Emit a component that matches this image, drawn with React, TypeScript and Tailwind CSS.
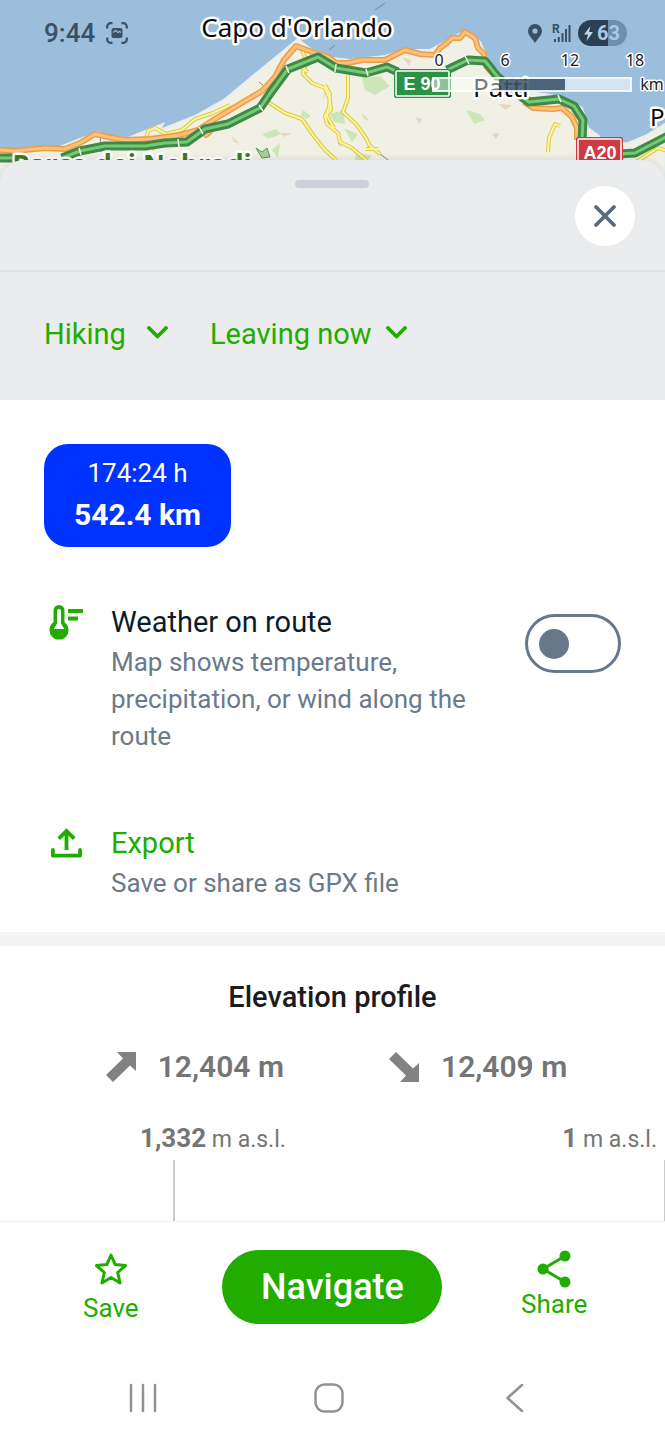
import type { ReactNode } from 'react'

const MOTORWAYS = [
    'M0 158 L18 158 M62 158 L80 151 L105 146 L145 146 L165 143 L187 142 L205 129 L228 124 L260 108 L271 92 L288 69 L318 57 L336 68 L366 73 L387 67 L398 72',
    'M447 70 L468 60 L485 61 L497 76 L515 92 L529 102 L559 99 L574 106 L583 120 L582 140',
    'M618 154 L635 153 L668 136',
]

const MAIN_ROADS = [
    'M0 150 L15 151 L45 148 L65 149 L80 143 L95 134 L108 137 L125 140 L150 139 L180 135 L198 130 L215 119 L240 104 L262 91 L275 77 L284 60 L296 46 L315 53 L328 57 L336 63 L348 63 L362 60 L385 60 L405 50 L420 54 L435 55 L440 48 L447 43 L452 38 L460 38 L465 32 L475 38 L478 48 L484 54 L486 66 L497 78',
    'M524 102 L533 108 L553 109 L562 108 L572 117 L577 128 L577 140',
    'M202 130 L206 135 L211 131',
]

const SIDE_ROADS = [
    'M144 148 L148 131 L155 128 L166 134 L182 130 L195 119 L213 113 L230 105',
    'M148 140 L155 150',
    'M268 102 L285 113 L302 119 L313 135 L325 150 L336 160',
    'M302 50 L306 60 L303 74 L312 83 L325 88 L330 100 L331 110 L325 116 L327 124 L338 133 L340 142 L352 148 L366 160',
    'M309 63 L302 68 L308 72',
    'M325 85 L330 94 L329 108 L326 114 L334 128',
    'M348 75 L348 98 L343 112 L356 124 L366 138 L370 146 L380 154 M366 149 L378 149',
    'M548 152 L549 138 L555 124 L560 126',
    'M636 162 L658 148 L668 151',
]

const WOODS =
    'M262 134 L276 129 L281 134 L268 139 Z M303 110 L311 116 L307 119 L301 115 Z M272 150 L280 143 L278 158 Z M330 114 L343 110 L345 124 L334 122 Z M362 78 L380 76 L390 86 L375 95 L365 90 Z M466 110 L480 114 L485 120 L474 124 Z M344 128 L358 134 L352 142 Z M356 152 L372 156 L368 160 L355 160 Z'

const FIELDS =
    'M231 135 L240 144 L234 142 Z M322 100 L327 86 L329 90 Z M280 133 L292 133 L284 137 Z M361 112 L370 121 L364 119 Z M416 117 L422 119 L419 124 Z M492 134 L499 133 L496 139 Z M498 104 L512 105 L506 110 Z M402 57 L411 60 L409 66 Z M337 143 L344 142 L340 147 Z'

const GREEN = '#20ad00'

function RoadLayer({ paths, casing, fill, width, inner }: { paths: string[]; casing: string; fill: string; width: number; inner: number }) {
    return (
        <g fill="none" strokeLinejoin="round">
            {paths.map((d) => <path key={d} d={d} stroke={casing} strokeWidth={width} />)}
            {paths.map((d) => <path key={d + 'in'} d={d} stroke={fill} strokeWidth={inner} />)}
        </g>
    )
}

function MapView() {
    return (
        <svg viewBox="0 0 665 186" preserveAspectRatio="xMidYMin slice" className="block w-full h-full">
            <rect width="665" height="186" fill="#9abedc" />
            <path
                d="M0 150 L60 147 L80 139 L98 132 L110 137 L128 138 L163 124 L160 130 L195 116 L225 99 L260 70 L298 39 L312 50 L332 58 L350 60 L385 56 L405 50 L430 50 L448 40 L465 31 L480 42 L488 60 L500 74 L514 90 L528 92 L545 94 L562 98 L582 108 L588 128 L599 136 L602 144 L628 143 L645 136 L665 124 L665 186 L0 186 Z"
                fill="#f0f0e5"
                stroke="#e9edee"
                strokeWidth="2"
            />
            <path d={WOODS} fill="#cde5b8" />
            <path d={FIELDS} fill="#e6d6c1" />
            <path d="M256 148 L262 158 L270 157 L267 148 L262 152 Z" fill="#a9cf98" stroke="#5d9557" strokeWidth="1" />
            <path d="M375 10 L385 3 M329 50 L335 45 M259 82 L265 87 M100 132 L101 152 M380 154 L388 160" stroke="#7189a5" strokeWidth="1" />
            <RoadLayer paths={SIDE_ROADS} casing="#dccb3c" fill="#faf5a4" width={4} inner={2} />
            <RoadLayer paths={MAIN_ROADS} casing="#ec9d48" fill="#fcc078" width={6} inner={3} />
            <RoadLayer paths={MOTORWAYS} casing="#41874a" fill="#74cc72" width={9} inner={3} />
            <path d="M79 148 L81 155 M178 139 L179 147 M199 127 L203 134 M259 105 L263 111 M286 66 L289 73 M336 64 L335 72 M366 69 L368 76 M465 56 L469 64 M558 95 L561 102" stroke="#f4f6e8" strokeWidth="1.5" />

            <g fontFamily='"Noto Sans", sans-serif' stroke="#fff" strokeWidth="5" strokeLinejoin="round" paintOrder="stroke">
                <text x="297" y="37" fontSize="26" textAnchor="middle" fill="#0b0b0b">Capo d'Orlando</text>
                <text x="473" y="97" fontSize="26" fill="#0b0b0b">Patti</text>
                <text x="650" y="126" fontSize="24" fill="#0b0b0b">P</text>
                <text x="132" y="174" fontSize="27" fontWeight="700" textAnchor="middle" fill="#3f7a1c">Parco dei Nebrodi</text>
            </g>

            <g fontFamily='"Liberation Sans", sans-serif' fontWeight="700" fill="#fff" textAnchor="middle">
                <rect x="394" y="69" width="57" height="29" rx="2" fill="#2a9145" />
                <rect x="396" y="71" width="53" height="25" rx="1" fill="none" stroke="#fff" strokeWidth="1.5" />
                <text x="422" y="90" fontSize="18">E 90</text>
                <rect x="576" y="137" width="47" height="30" rx="2" fill="#cf3b45" />
                <rect x="578" y="139" width="43" height="26" rx="1" fill="none" stroke="#fff" strokeWidth="1.5" />
                <text x="600" y="159" fontSize="18">A20</text>
            </g>

            {/* distance scale */}
            <rect x="433" y="79" width="66" height="12" fill="#fff" fillOpacity="0.45" />
            <rect x="499" y="79" width="66" height="12" fill="#40566d" fillOpacity="0.88" />
            <rect x="565" y="79" width="66" height="12" fill="#d3e4f3" />
            <rect x="433" y="78" width="198" height="13" fill="none" stroke="#fff" strokeOpacity="0.85" strokeWidth="2" />
            <g fontFamily='"Noto Sans", sans-serif' fontSize="16" fill="#222" stroke="#fff" strokeWidth="3" strokeLinejoin="round" paintOrder="stroke" textAnchor="middle">
                <text x="439" y="66">0</text>
                <text x="505" y="66">6</text>
                <text x="570" y="66">12</text>
                <text x="635" y="66">18</text>
                <text x="652" y="90">km</text>
            </g>
        </svg>
    )
}

function StatusBar() {
    return (
        <div className="absolute inset-x-0 top-0 flex items-center justify-between pt-5 pl-11 pr-[38px] text-[#3b5064]">
            <div className="flex items-center gap-[11px]">
                <span className="text-[26px] leading-[26px] font-medium">9:44</span>
                <svg width="22" height="22" viewBox="0 0 22 22" fill="none" stroke="currentColor" strokeWidth="2.2">
                    <path d="M1.2 6.500V4.500A3.300 3.300 0 0 1 4.500 1.200H6.500M15.500 1.200H17.500A3.300 3.300 0 0 1 20.800 4.500V6.500M20.800 15.500V17.500A3.300 3.300 0 0 1 17.500 20.800H15.500M6.500 20.800H4.500A3.300 3.300 0 0 1 1.200 17.500V15.500" />
                    <rect x="5.500" y="6" width="11" height="10" rx="2" fill="currentColor" stroke="none" />
                    <path d="M7 10.500L9.500 8.500L12 10.500L13.500 9.500L15 10.500" stroke="#9abedc" strokeWidth="1.200" />
                </svg>
            </div>
            <div className="flex items-center">
                <svg width="14" height="19" viewBox="0 0 14 19" className="mr-[10px]">
                    <path fillRule="evenodd" fill="currentColor" d="M7 0A7 7 0 0 0 0 7C0 11.500 4 14 7 19C10 14 14 11.500 14 7A7 7 0 0 0 7 0ZM7 4.400A2.600 2.600 0 1 1 7 9.600A2.600 2.600 0 0 1 7 4.400Z" />
                </svg>
                <svg width="19" height="20" viewBox="0 0 19 20" className="mr-[7px]" fill="currentColor">
                    <text x="0" y="10" fontSize="12" fontWeight="700">R</text>
                    <path d="M2 16H4V19H2ZM5.800 14H7.800V19H5.800ZM9.500 10H11.500V19H9.500ZM13 6H15V19H13ZM16.500 2H18.500V19H16.500Z" />
                </svg>
                <div className="flex h-[26px] w-[49px] items-center gap-1 overflow-hidden rounded-full bg-linear-to-r from-[#2b4153] from-62% to-[#6e90ae] to-62% pl-[6px]">
                    <svg width="9" height="15" viewBox="0 0 9 15" fill="#bcd8ef">
                        <path d="M6.500 0L0 8.500H4L2.500 15L9 6H5Z" />
                    </svg>
                    <span className="text-xl leading-[26px] font-bold text-[#a9c9e4]">63</span>
                </div>
            </div>
        </div>
    )
}

function Dropdown({ label, value, className }: { label: string; value: string; className?: string }) {
    return (
        <div className={`relative ${className ?? ''}`}>
            <select aria-label={label} className="field-sizing-content w-full appearance-none bg-transparent pr-[35px] text-[29px] leading-10 text-[#20ad00] outline-none">
                <option>{value}</option>
            </select>
            <svg width="21" height="13" viewBox="0 0 21 13" className="pointer-events-none absolute right-0 top-3" fill="none" stroke={GREEN} strokeWidth="3.800" strokeLinecap="round" strokeLinejoin="round">
                <path d="M2 2L10.500 10.500L19 2" />
            </svg>
        </div>
    )
}

function Row({ icon, children }: { icon: ReactNode; children: ReactNode }) {
    return (
        <div className="flex items-start">
            <div className="flex w-[67px] shrink-0 pt-1 pl-[5px]">{icon}</div>
            {children}
        </div>
    )
}

export default function App() {
    return (
        <div className="flex min-h-screen flex-col bg-white font-[Roboto,sans-serif]">
            <header className="relative h-[186px] overflow-hidden">
                <MapView />
                <StatusBar />
            </header>

            <main className="relative -mt-[26px] flex-1">
                <div className="rounded-t-3xl bg-[#ebecee] shadow-[0_-2px_6px_rgba(0,0,0,0.08)]">
                    <div className="grid h-28 grid-cols-3 items-start border-b-2 border-[#dbdfe9] px-[30px]">
                        <span className="col-start-2 mt-5 h-2 w-[74px] justify-self-center rounded-full bg-[#cdd2da]" />
                        <button type="button" aria-label="Close" className="mt-[26px] flex size-[60px] items-center justify-center justify-self-end rounded-full bg-white">
                            <svg width="24" height="24" viewBox="0 0 24 24" stroke="#586b7e" strokeWidth="3.800" strokeLinecap="round">
                                <path d="M3 3L21 21M21 3L3 21" />
                            </svg>
                        </button>
                    </div>
                    <div className="flex h-32 items-center gap-[42px] px-11 pb-1">
                        <Dropdown label="Activity" value="Hiking" className="min-w-[124px]" />
                        <Dropdown label="Departure" value="Leaving now" />
                    </div>
                </div>

                <section className="bg-white px-11 pt-11 pb-[30px]">
                    <button type="button" className="flex flex-col items-center rounded-3xl bg-[#0033ff] px-[30px] pt-[9px] pb-3 text-white">
                        <span className="text-[26px] leading-[41px]">174:24 h</span>
                        <span className="text-3xl leading-[41px] font-bold">542.4 km</span>
                    </button>

                    <div className="mt-[54px] flex items-start justify-between">
                        <Row
                            icon={
                                <svg width="35" height="35" viewBox="0 0 35 35">
                                    <path fillRule="evenodd" fill={GREEN} d="M4.500 5.500A5.500 5.500 0 0 1 15.500 5.500V17.300A9.500 9.500 0 1 1 4.500 17.300ZM8 6V18.500L4.800 24H15.200L12 18.500V6A2 2 0 0 0 8 6Z" />
                                    <path fill={GREEN} d="M19 4H34V8H19ZM19 11.500H29V15.500H19Z" />
                                </svg>
                            }
                        >
                            <div className="max-w-[370px]">
                                <label htmlFor="weather" className="block text-[29px] leading-[43px] text-[#0c1c2c]">Weather on route</label>
                                <p id="weather-desc" className="text-[26px] leading-[37px] text-[#6a7a8a]">Map shows temperature, precipitation, or wind along the route</p>
                            </div>
                        </Row>
                        <input
                            id="weather"
                            type="checkbox"
                            role="switch"
                            aria-describedby="weather-desc"
                            className="mt-[13px] flex h-[59px] w-24 shrink-0 appearance-none items-center rounded-full border-[3px] border-[#66788a] px-[11px] before:size-[30px] before:rounded-full before:bg-[#66788a] checked:justify-end"
                        />
                    </div>

                    <div className="mt-[67px]">
                        <Row
                            icon={
                                <svg width="35" height="35" viewBox="0 0 35 35" fill="none" stroke={GREEN} strokeWidth="3.800" strokeLinejoin="round">
                                    <path d="M3.900 24V29.600H31.100V24" strokeLinecap="round" />
                                    <path d="M17.500 24V5.500M9.800 12.700L17.500 5L25.200 12.700" strokeLinejoin="miter" />
                                </svg>
                            }
                        >
                            <button type="button" className="text-left">
                                <span className="block text-[29px] leading-[43px] text-[#20ad00]">Export</span>
                                <span className="block text-[26px] leading-[37px] text-[#6a7a8a]">Save or share as GPX file</span>
                            </button>
                        </Row>
                    </div>
                </section>

                <section className="border-t-[14px] border-[#f4f4f7] pt-7">
                    <h2 className="text-center text-[29px] leading-[46px] font-medium text-[#1c1c1e]">Elevation profile</h2>
                    <div className="mt-6 flex justify-center gap-[105px] pl-2 text-3xl leading-[46px] font-semibold text-[#757575]">
                        <div className="flex items-center gap-[22px]">
                            <svg width="30" height="30" viewBox="0 0 30 30" fill="#828282">
                                <path d="M11 0H30V19L24 13.500L7 30L0 23L17 6.500Z" />
                            </svg>
                            <span className="leading-[46px]">12,404 m</span>
                        </div>
                        <div className="flex items-center gap-[22px]">
                            <svg width="30" height="30" viewBox="0 0 30 30" fill="#828282">
                                <path d="M11 30H30V11L24 16.500L7 0L0 7L17 23.500Z" />
                            </svg>
                            <span className="leading-[46px]">12,409 m</span>
                        </div>
                    </div>
                    <div className="mt-7 flex justify-between pl-[140px] pr-2 text-[23px] leading-10 text-[#757575]">
                        <span><strong className="text-[26px]">1,332</strong> m a.s.l.</span>
                        <span><strong className="text-[26px]">1</strong> m a.s.l.</span>
                    </div>
                    <svg className="block h-[61px] w-full" stroke="#c9c9cb" strokeWidth="2">
                        <path d="M174 0V61" />
                        <line x1="100%" y1="0" x2="100%" y2="61" />
                    </svg>
                </section>
            </main>

            <footer className="border-t border-[#f1f1f3] bg-white">
                <div className="grid grid-cols-3 items-start justify-items-center pt-7 pb-8 text-[26px] leading-8 text-[#20ad00]">
                    <button type="button" className="flex flex-col items-center gap-[6px] pt-[2px]">
                        <svg width="34" height="34" viewBox="0 0 34 34" fill="none" stroke={GREEN} strokeWidth="3" strokeLinejoin="round">
                            <path d="M17 3L21.200 12.600L31.500 13.600L23.700 20.500L26 31L17 25.500L8 31L10.300 20.500L2.500 13.600L12.800 12.600Z" />
                        </svg>
                        Save
                    </button>
                    <button type="button" className="h-[74px] w-[220px] rounded-full bg-[#20ad00] text-4xl font-medium text-white">Navigate</button>
                    <button type="button" className="flex flex-col items-center">
                        <svg width="34" height="38" viewBox="0 0 34 38" fill={GREEN} stroke={GREEN}>
                            <path d="M28 6L6 19L28 32" fill="none" strokeWidth="3" />
                            <circle cx="28" cy="6" r="5.500" stroke="none" />
                            <circle cx="6" cy="19" r="5.500" stroke="none" />
                            <circle cx="28" cy="32" r="5.500" stroke="none" />
                        </svg>
                        Share
                    </button>
                </div>
                <nav className="grid h-[84px] grid-cols-3 place-items-center pl-[50px] pr-[57px]">
                    <button type="button" aria-label="Recent apps">
                        <svg width="30" height="30" viewBox="0 0 30 30" stroke="#929292" strokeWidth="2.500" strokeLinecap="round">
                            <path d="M3 2V28M15 2V28M27 2V28" />
                        </svg>
                    </button>
                    <button type="button" aria-label="Home">
                        <svg width="30" height="30" viewBox="0 0 30 30" fill="none" stroke="#929292" strokeWidth="2.500">
                            <rect x="1.500" y="1.500" width="27" height="27" rx="9" />
                        </svg>
                    </button>
                    <button type="button" aria-label="Back">
                        <svg width="20" height="30" viewBox="0 0 20 30" fill="none" stroke="#929292" strokeWidth="2.500" strokeLinecap="round" strokeLinejoin="round">
                            <path d="M17 2L2.500 15L17 28" />
                        </svg>
                    </button>
                </nav>
            </footer>
        </div>
    )
}
